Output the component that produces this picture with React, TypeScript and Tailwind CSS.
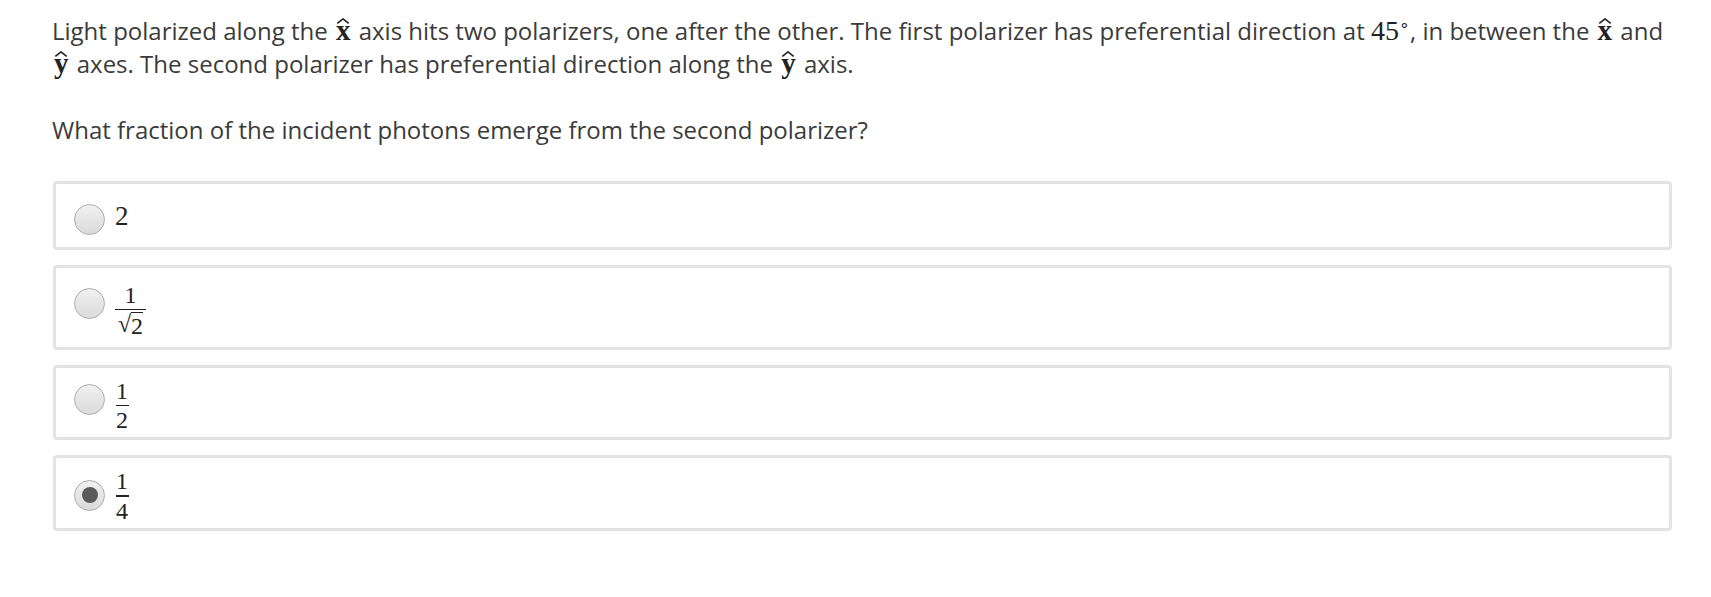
import React from 'react';

const mathFont = "font-['Liberation_Serif','Times_New_Roman',serif]";

const Hat = () => (
  <svg
    className="absolute left-1/2 top-[2px] -translate-x-1/2"
    width="13"
    height="6"
    viewBox="0 0 13 6"
  >
    <path d="M0.8 5.4 L6.5 0.9 L12.2 5.4" fill="none" stroke="#222" strokeWidth="1.6" />
  </svg>
);

const Vec = ({ c }: { c: string }) => (
  <span className={`relative inline-block px-[2px] ${mathFont} font-bold text-[29px] leading-none text-[#222]`}>
    {c}
    <Hat />
  </span>
);

const Degrees = () => (
  <span className={`${mathFont} text-[28px] leading-none text-[#222]`}>
    45<span className="align-super text-[17px]">∘</span>
  </span>
);

const Frac = ({ num, den, wide }: { num: React.ReactNode; den: React.ReactNode; wide?: boolean }) => (
  <span className={`inline-flex flex-col items-center ${mathFont} text-[24px] leading-none text-[#222]`}>
    <span className="px-[1px]">{num}</span>
    <span className={`my-[2px] h-[1.5px] bg-[#222] ${wide ? 'w-[31px]' : 'w-[13px]'}`} />
    <span className="px-[1px]">{den}</span>
  </span>
);

const Sqrt2 = () => (
  <span className="inline-flex items-start">
    <span className="text-[24px] leading-none">√</span>
    <span className="border-t-[1.5px] border-[#222] leading-none pt-[1px]">2</span>
  </span>
);

type Option = {
  id: string;
  content: React.ReactNode;
  height: string;
  radioOffset: string;
  checked?: boolean;
};

const options: Option[] = [
  {
    id: 'a',
    content: <span className={`${mathFont} text-[27px] leading-none text-[#222]`}>2</span>,
    height: 'h-[69px]',
    radioOffset: 'mt-[7px]',
  },
  {
    id: 'b',
    content: <Frac num="1" den={<Sqrt2 />} wide />,
    height: 'h-[85px]',
    radioOffset: 'mt-[-9px]',
  },
  {
    id: 'c',
    content: <Frac num="1" den="2" />,
    height: 'h-[75px]',
    radioOffset: 'mt-[-7px]',
  },
  {
    id: 'd',
    content: <Frac num="1" den="4" />,
    height: 'h-[76px]',
    radioOffset: 'mt-[4px]',
    checked: true,
  },
];

const Radio = ({ checked, offset }: { checked?: boolean; offset: string }) => (
  <span
    className={`flex h-[31px] w-[31px] shrink-0 items-center justify-center rounded-full border border-[#ababab] bg-gradient-to-b from-[#f1f1f1] to-[#dadada] ${offset}`}
  >
    {checked && <span className="h-[16px] w-[16px] rounded-full bg-[#5a5a5a]" />}
  </span>
);

export default function App() {
  return (
    <div className="min-h-screen bg-white pl-[52px] pr-[39px] pt-[14px] font-['Open_Sans',sans-serif] text-[24px] leading-[33px] text-[#3b3b3b]">
      <p>
        Light polarized along the <Vec c="x" /> axis hits two polarizers, one after the other. The first polarizer has
        preferential direction at <Degrees />, in between the <Vec c="x" /> and <Vec c="y" /> axes. The second polarizer
        has preferential direction along the <Vec c="y" /> axis.
      </p>
      <p className="mt-[33px]">What fraction of the incident photons emerge from the second polarizer?</p>

      <div className="mt-[35px] ml-[1px] flex flex-col gap-[15px]">
        {options.map((o) => (
          <label
            key={o.id}
            className={`flex items-center gap-[8px] rounded-[4px] border-[3px] border-[#e3e3e3] pl-[18px] ${o.height}`}
          >
            <Radio checked={o.checked} offset={o.radioOffset} />
            <span className="ml-[2px]">{o.content}</span>
          </label>
        ))}
      </div>
    </div>
  );
}
